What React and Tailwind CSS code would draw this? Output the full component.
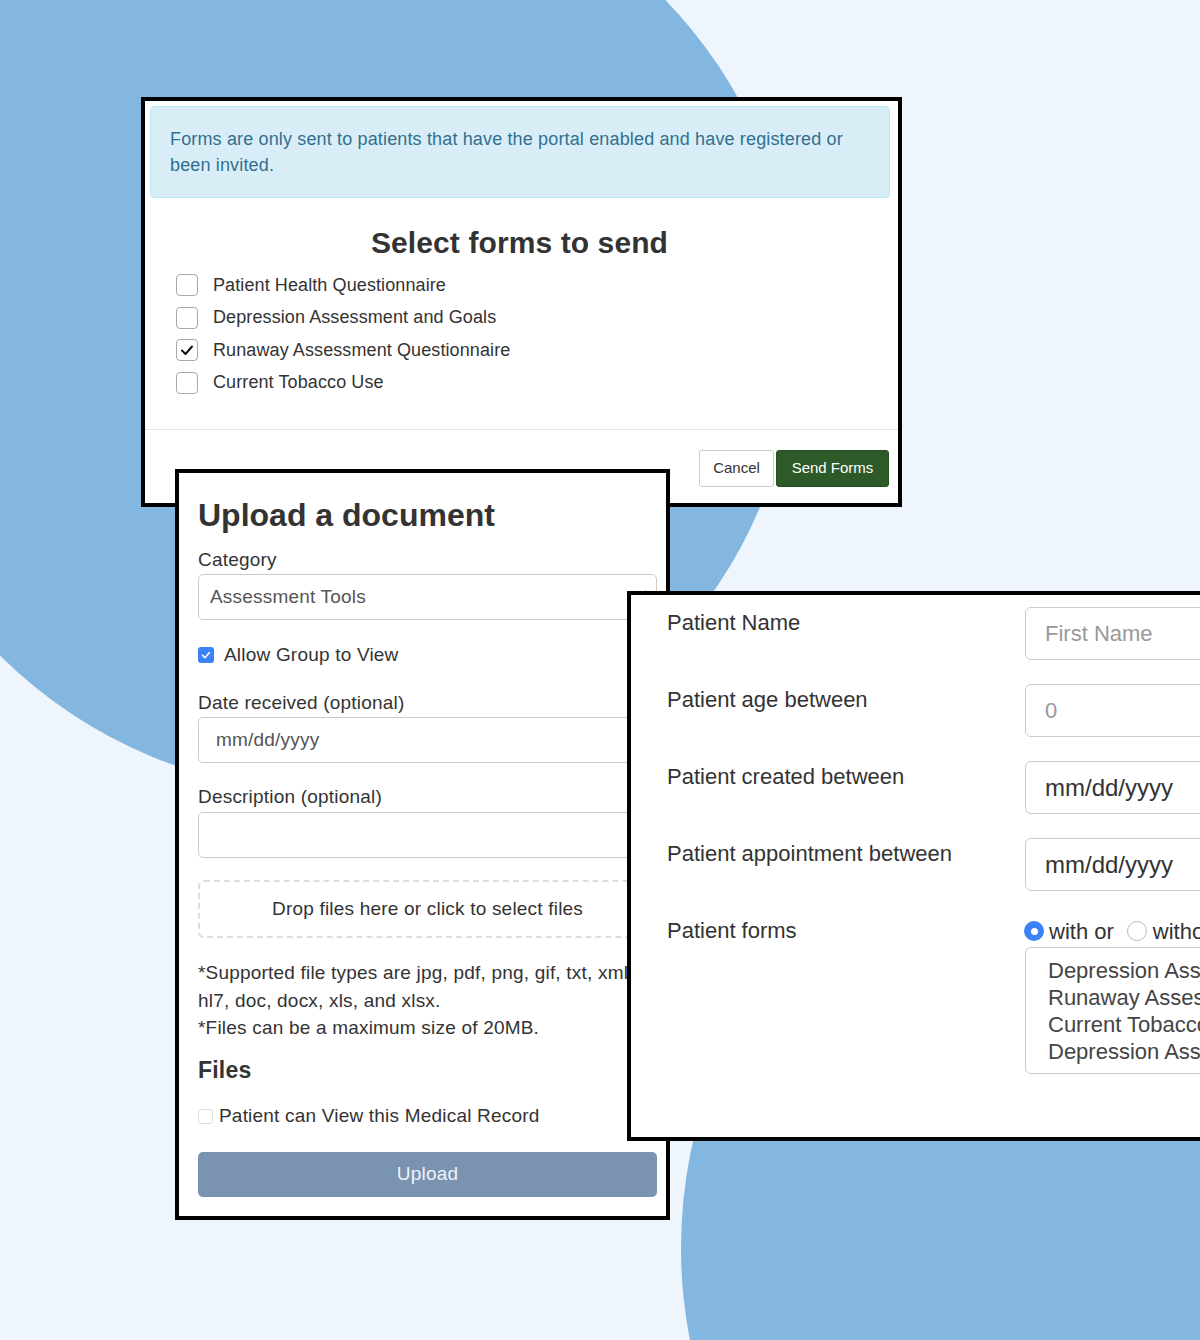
import React from "react";

const forms = [
  { name: "Patient Health Questionnaire", checked: false },
  { name: "Depression Assessment and Goals", checked: false },
  { name: "Runaway Assessment Questionnaire", checked: true },
  { name: "Current Tobacco Use", checked: false },
];

const patientForms = [
  "Depression Assessment and Goals",
  "Runaway Assessment Questionnaire",
  "Current Tobacco Use",
  "Depression Assessment and Goals",
];

const FormCheckbox = ({ checked }) => (
  <span className="flex h-[22px] w-[22px] shrink-0 items-center justify-center rounded-[4px] border-[1.5px] border-[#a8a8a8] bg-white">
    {checked && (
      <svg width="16" height="16" viewBox="0 0 16 16" fill="none">
        <path d="M3 8.5 L6.5 12 L13 4.5" stroke="#111" strokeWidth="2" strokeLinecap="round" strokeLinejoin="round" />
      </svg>
    )}
  </span>
);

const SendFormsWindow = () => (
  <div className="absolute left-[141px] top-[97px] h-[410px] w-[761px] border-4 border-black bg-white">
    {/* info alert */}
    <div className="ml-[5px] mr-[8px] mt-[5px] h-[92px] rounded-[4px] border border-[#bce8f1] bg-[#d9edf7] pl-[19px] pr-4 pt-[19px] text-[18px] leading-[26px] tracking-[0.15px] text-[#31708f]">
      Forms are only sent to patients that have the portal enabled and have registered or been invited.
    </div>

    <h2 className="mt-[27px] pr-1 text-center text-[30px] font-bold leading-[36px] tracking-[0.1px] text-[#333]">
      Select forms to send
    </h2>

    <div className="mt-2 flex flex-col pl-[31px]">
      {forms.map((f) => (
        <label key={f.name} className="flex h-[32.5px] items-center gap-[15px] text-[18px] tracking-[0.1px] text-[#333]">
          <FormCheckbox checked={f.checked} />
          <span>{f.name}</span>
        </label>
      ))}
    </div>

    <div className="mt-[30px] border-t border-[#e5e5e5]" />

    <div className="flex justify-end gap-[2px] pr-[9px] pt-[20px]">
      <button className="h-[37px] w-[75px] rounded-[3px] border border-[#ccc] bg-white text-[15px] text-[#333]">
        Cancel
      </button>
      <button className="h-[37px] w-[113px] rounded-[3px] border border-[#28501f] bg-[#2e5a29] text-[15px] text-white">
        Send Forms
      </button>
    </div>
  </div>
);

const TextBox = ({ children, className = "" }) => (
  <div className={`flex h-[46px] items-center rounded-[5px] border border-[#ccc] bg-white text-[19px] text-[#555] ${className}`}>
    {children}
  </div>
);

const UploadWindow = () => (
  <div className="absolute left-[175px] top-[469px] h-[751px] w-[495px] border-4 border-black bg-white pl-[19px] pr-[9px] pt-[22px] tracking-[0.2px] text-[#333]">
    <h2 className="text-[32px] font-bold leading-[40px] tracking-normal">Upload a document</h2>

    <p className="mt-[12px] text-[19px] leading-[26px]">Category</p>
    <TextBox className="relative mt-[1px] pl-[11px]">
      Assessment Tools
      <svg className="absolute right-[6px] top-[13px]" width="8" height="18" viewBox="0 0 8 18" fill="none">
        <path d="M1 6 L4 3 L7 6" stroke="#666" strokeWidth="1.2" />
        <path d="M1 12 L4 15 L7 12" stroke="#666" strokeWidth="1.2" />
      </svg>
    </TextBox>

    <label className="mt-[22px] flex h-[26px] items-center gap-[10px] text-[19px]">
      <span className="flex h-4 w-4 items-center justify-center rounded-[3px] bg-[#3b82f6]">
        <svg width="12" height="12" viewBox="0 0 12 12" fill="none">
          <path d="M2.5 6.2 L5 8.7 L9.5 3.5" stroke="white" strokeWidth="1.6" strokeLinecap="round" strokeLinejoin="round" />
        </svg>
      </span>
      Allow Group to View
    </label>

    <p className="mt-[22px] text-[19px] leading-[26px]">Date received (optional)</p>
    <TextBox className="mt-[1px] pl-[17px]">mm/dd/yyyy</TextBox>

    <p className="mt-[21px] text-[19px] leading-[26px]">Description (optional)</p>
    <TextBox className="mt-[2px]" />

    <div className="mt-[22px] flex h-[58px] items-center justify-center rounded-[6px] border-2 border-dashed border-[#ddd] text-[19px]">
      Drop files here or click to select files
    </div>

    <p className="mt-[21px] whitespace-nowrap text-[19px] leading-[27.5px]">
      *Supported file types are jpg, pdf, png, gif, txt, xml,
      <br />
      hl7, doc, docx, xls, and xlsx.
      <br />
      *Files can be a maximum size of 20MB.
    </p>

    <h3 className="mt-[13px] text-[23px] font-bold leading-[30px]">Files</h3>

    <label className="mt-[19px] flex h-[26px] items-center gap-[6px] text-[19px]">
      <span className="h-[15px] w-[15px] rounded-[3px] border border-[#ddd] bg-white" />
      Patient can View this Medical Record
    </label>

    <button className="mt-[22px] h-[45px] w-full rounded-[5px] bg-[#7a93b0] text-[19px] text-[#eef2f7]">
      Upload
    </button>
  </div>
);

const SearchRow = ({ label, children, last }) => (
  <div className={`flex ${last ? "" : "mb-[24px]"}`}>
    <div className="w-[358px] shrink-0 pt-[2px] text-[22px] leading-[28px] text-[#333]">{label}</div>
    <div>{children}</div>
  </div>
);

const SearchInput = ({ children, className = "" }) => (
  <div className={`flex h-[53px] w-[400px] items-center rounded-[6px] border border-[#ccc] bg-white pl-[19px] ${className}`}>
    {children}
  </div>
);

const PatientSearchWindow = () => (
  <div className="absolute left-[627px] top-[591px] h-[550px] w-[700px] border-4 border-black bg-white pl-[36px] pt-[12px]">
    <SearchRow label="Patient Name">
      <SearchInput className="text-[22px] text-[#999]">First Name</SearchInput>
    </SearchRow>
    <SearchRow label="Patient age between">
      <SearchInput className="text-[22px] text-[#999]">0</SearchInput>
    </SearchRow>
    <SearchRow label="Patient created between">
      <SearchInput className="text-[24px] text-[#333]">mm/dd/yyyy</SearchInput>
    </SearchRow>
    <SearchRow label="Patient appointment between">
      <SearchInput className="text-[24px] text-[#333]">mm/dd/yyyy</SearchInput>
    </SearchRow>
    <SearchRow label="Patient forms" last>
      <div className="-ml-px flex h-[32px] items-center whitespace-nowrap text-[22px] text-[#333]">
        <span className="flex h-5 w-5 items-center justify-center rounded-full bg-[#3b82f6]">
          <span className="h-[7px] w-[7px] rounded-full bg-white" />
        </span>
        <span className="ml-[5px]">with or</span>
        <span className="ml-[13px] h-5 w-5 rounded-full border border-[#bbb] bg-white" />
        <span className="ml-[6px]">without</span>
      </div>
      <div className="h-[127px] w-[400px] whitespace-nowrap rounded-[6px] border border-[#ccc] pl-[22px] pt-[9px] text-[22px] leading-[27px] text-[#444]">
        {patientForms.map((f, i) => (
          <div key={i}>{f}</div>
        ))}
      </div>
    </SearchRow>
  </div>
);

export default function App() {
  return (
    <div className="relative h-[1340px] w-[1200px] overflow-hidden bg-[#eef5fc] font-['Liberation_Sans',Arial,sans-serif]">
      {/* background blobs */}
      <div className="absolute left-[-137px] top-[-142px] h-[934px] w-[934px] rounded-full bg-[#84b7e0]" />
      <div className="absolute left-[681px] top-[768px] h-[960px] w-[960px] rounded-full bg-[#84b7e0]" />

      <SendFormsWindow />
      <UploadWindow />
      <PatientSearchWindow />
    </div>
  );
}
